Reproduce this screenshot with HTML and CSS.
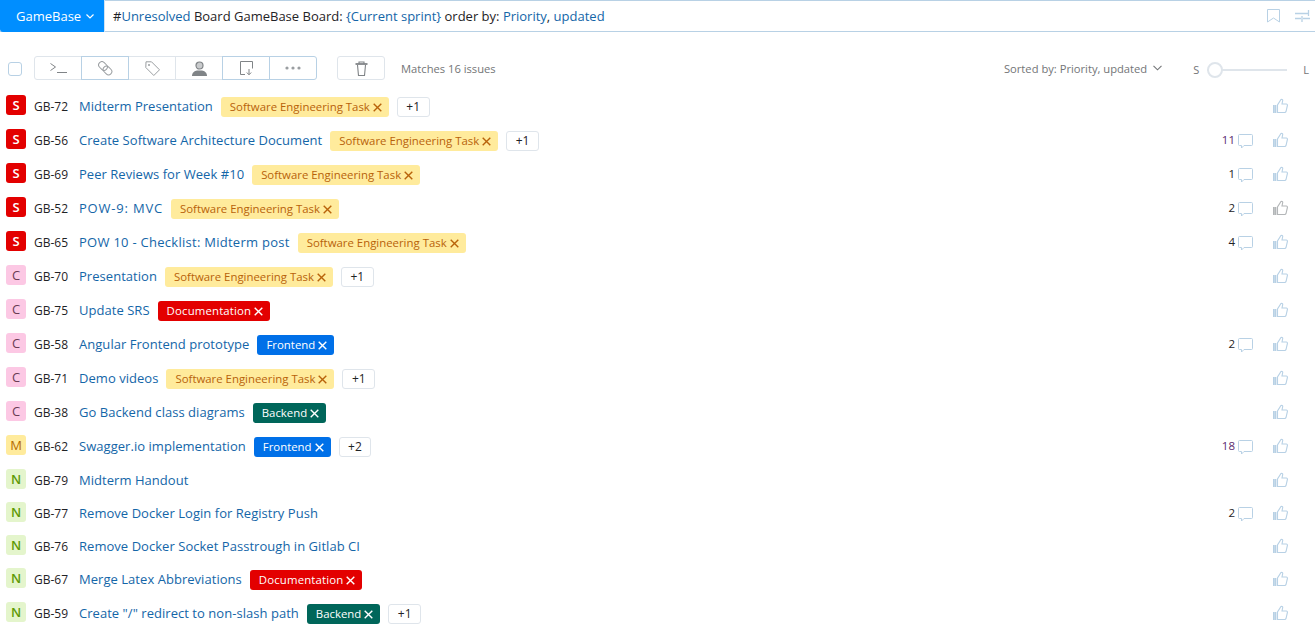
FILE: index.html
```html
<!DOCTYPE html>
<html lang="en">
<head>
    <meta charset="UTF-8">
    <title>Issues</title>
    <link rel="stylesheet" href="styles.css">
</head>
<body>
    <svg class="defs" width="0" height="0">
        <symbol id="i-x" viewBox="0 0 9 9"><path d="M.7.7l7.600 7.600M8.300.7L.7 8.300" fill="none" stroke="currentColor" stroke-width="1.400"/></symbol>
        <symbol id="i-comment" viewBox="0 0 15 15"><path d="M1.500.5h12a1 1 0 0 1 1 1v9a1 1 0 0 1-1 1H6l-2.500 2.500v-2.500H1.500a1 1 0 0 1-1-1v-9a1 1 0 0 1 1-1z" fill="none" stroke="currentColor"/></symbol>
        <symbol id="i-thumb" viewBox="0 0 15 16"><path d="M.5 7v8M2.500 7v8" fill="none" stroke="currentColor" stroke-width="1.800"/><path d="M4.500 14.500V7L8 1.500c1.300-.5 2 .4 1.600 1.700L9 6h4.300c.8 0 1.300.7 1.100 1.500l-1.400 6c-.2.700-.6 1-1.300 1z" fill="none" stroke="currentColor" stroke-width="1.100"/></symbol>
    </svg>

    <header class="search">
        <button class="context">GameBase
            <svg width="8" height="5" viewBox="0 0 8 5"><path d="M.5.500L4 4 7.500.500" fill="none" stroke="#fff" stroke-width="1.200"/></svg>
        </button>
        <div class="query">
            #<span class="lnk">Unresolved</span> Board GameBase Board: <span class="lnk">{Current sprint}</span> order by: <span class="lnk">Priority</span>, <span class="lnk">updated</span>
        </div>
        <svg class="q-icon" width="13" height="14" viewBox="0 0 13 14"><path d="M.5.500h12v12.500L6.500 9 .5 13z" fill="none" stroke="currentColor"/></svg>
        <svg class="q-icon" width="15" height="12" viewBox="0 0 15 12"><path d="M0 3.500h13M13.500 0v6M0 8.500h6M7 6v6M8 8.500h7" fill="none" stroke="currentColor" stroke-width="1.300"/></svg>
    </header>

    <section class="toolbar">
        <span class="check"></span>
        <div class="btn-group">
            <button class="tb-btn">
                <svg class="dark" width="17" height="10" viewBox="0 0 17 10"><path d="M.5.500L5.500 4 .5 7.500M7 9.500h10" fill="none" stroke="currentColor"/></svg>
            </button>
            <button class="tb-btn on">
                <svg width="15" height="15" viewBox="0 0 15 15"><g fill="none" stroke="currentColor"><rect x=".25" y="1.750" width="9.500" height="6.500" rx="3.250" transform="rotate(45 5 5)"/><rect x="4.750" y="6.250" width="9.500" height="6.500" rx="3.250" transform="rotate(45 9.500 9.500)"/></g></svg>
            </button>
            <button class="tb-btn">
                <svg width="15" height="15" viewBox="0 0 15 15"><path d="M1 .8h5.500l8 8-5.700 5.700-8-8z" fill="none" stroke="currentColor"/><circle cx="4" cy="4" r="1" fill="currentColor"/></svg>
            </button>
            <button class="tb-btn">
                <svg class="dark" width="15" height="15" viewBox="0 0 15 15"><circle cx="7.500" cy="4.500" r="3.500" fill="#c9cbcd" stroke="currentColor" stroke-width="1.200"/><path d="M0 15c0-3.500 2.500-5 5-5.500h5c2.500.5 5 2 5 5.500z" fill="currentColor"/></svg>
            </button>
            <button class="tb-btn on">
                <svg class="dark" width="13" height="14" viewBox="0 0 13 14"><path d="M5 13.500H.5V.5h12v7M9 8v5.500M6.800 11.500L9 13.800l2.200-2.300" fill="none" stroke="currentColor"/></svg>
            </button>
            <button class="tb-btn dots on">
                <svg width="16" height="4" viewBox="0 0 16 4"><circle cx="2" cy="2" r="1.600" fill="currentColor"/><circle cx="8" cy="2" r="1.600" fill="currentColor"/><circle cx="14" cy="2" r="1.600" fill="currentColor"/></svg>
            </button>
        </div>
        <button class="tb-btn trash">
            <svg class="dark" width="13" height="15" viewBox="0 0 13 15"><path d="M.5 3h12" fill="none" stroke="currentColor" stroke-width="1.800"/><path d="M4 3V1h5v2M2.500 4l1 10.500h6l1-10.500" fill="none" stroke="currentColor" stroke-width="1.100"/></svg>
        </button>
        <span class="matches">Matches 16 issues</span>
        <span class="sorted">Sorted by: Priority, updated
            <svg width="9" height="6" viewBox="0 0 9 6"><path d="M.5.800L4.500 4.800 8.500.800" fill="none" stroke="currentColor" stroke-width="1.100"/></svg>
        </span>
        <div class="size">
            <span>S</span>
            <div class="track"><i class="knob"></i></div>
            <span>L</span>
        </div>
    </section>

    <ul class="issues">
        <li class="issue">
            <span class="prio p-s">S</span><span class="id">GB-72</span><a class="title">Midterm Presentation</a>
            <span class="tag t-yellow">Software Engineering Task<svg><use href="#i-x"/></svg></span><span class="more">+1</span>
            <span class="stats"><svg class="thumb"><use href="#i-thumb"/></svg></span>
        </li>
        <li class="issue">
            <span class="prio p-s">S</span><span class="id">GB-56</span><a class="title">Create Software Architecture Document</a>
            <span class="tag t-yellow">Software Engineering Task<svg><use href="#i-x"/></svg></span><span class="more">+1</span>
            <span class="stats"><b class="n n-p">11</b><svg class="bubble"><use href="#i-comment"/></svg><svg class="thumb"><use href="#i-thumb"/></svg></span>
        </li>
        <li class="issue">
            <span class="prio p-s">S</span><span class="id">GB-69</span><a class="title">Peer Reviews for Week #10</a>
            <span class="tag t-yellow">Software Engineering Task<svg><use href="#i-x"/></svg></span>
            <span class="stats"><b class="n">1</b><svg class="bubble"><use href="#i-comment"/></svg><svg class="thumb"><use href="#i-thumb"/></svg></span>
        </li>
        <li class="issue">
            <span class="prio p-s">S</span><span class="id">GB-52</span><a class="title wider">POW-9: MVC</a>
            <span class="tag t-yellow">Software Engineering Task<svg><use href="#i-x"/></svg></span>
            <span class="stats"><b class="n">2</b><svg class="bubble"><use href="#i-comment"/></svg><svg class="thumb voted"><use href="#i-thumb"/></svg></span>
        </li>
        <li class="issue">
            <span class="prio p-s">S</span><span class="id">GB-65</span><a class="title wide">POW 10 - Checklist: Midterm post</a>
            <span class="tag t-yellow">Software Engineering Task<svg><use href="#i-x"/></svg></span>
            <span class="stats"><b class="n">4</b><svg class="bubble"><use href="#i-comment"/></svg><svg class="thumb"><use href="#i-thumb"/></svg></span>
        </li>
        <li class="issue">
            <span class="prio p-c">C</span><span class="id">GB-70</span><a class="title">Presentation</a>
            <span class="tag t-yellow">Software Engineering Task<svg><use href="#i-x"/></svg></span><span class="more">+1</span>
            <span class="stats"><svg class="thumb"><use href="#i-thumb"/></svg></span>
        </li>
        <li class="issue">
            <span class="prio p-c">C</span><span class="id">GB-75</span><a class="title">Update SRS</a>
            <span class="tag t-red">Documentation<svg><use href="#i-x"/></svg></span>
            <span class="stats"><svg class="thumb"><use href="#i-thumb"/></svg></span>
        </li>
        <li class="issue">
            <span class="prio p-c">C</span><span class="id">GB-58</span><a class="title">Angular Frontend prototype</a>
            <span class="tag t-blue">Frontend<svg><use href="#i-x"/></svg></span>
            <span class="stats"><b class="n">2</b><svg class="bubble"><use href="#i-comment"/></svg><svg class="thumb"><use href="#i-thumb"/></svg></span>
        </li>
        <li class="issue">
            <span class="prio p-c">C</span><span class="id">GB-71</span><a class="title">Demo videos</a>
            <span class="tag t-yellow">Software Engineering Task<svg><use href="#i-x"/></svg></span><span class="more">+1</span>
            <span class="stats"><svg class="thumb"><use href="#i-thumb"/></svg></span>
        </li>
        <li class="issue">
            <span class="prio p-c">C</span><span class="id">GB-38</span><a class="title">Go Backend class diagrams</a>
            <span class="tag t-green">Backend<svg><use href="#i-x"/></svg></span>
            <span class="stats"><svg class="thumb"><use href="#i-thumb"/></svg></span>
        </li>
        <li class="issue">
            <span class="prio p-m">M</span><span class="id">GB-62</span><a class="title">Swagger.io implementation</a>
            <span class="tag t-blue">Frontend<svg><use href="#i-x"/></svg></span><span class="more">+2</span>
            <span class="stats"><b class="n n-p">18</b><svg class="bubble"><use href="#i-comment"/></svg><svg class="thumb"><use href="#i-thumb"/></svg></span>
        </li>
        <li class="issue">
            <span class="prio p-n">N</span><span class="id">GB-79</span><a class="title">Midterm Handout</a>
            <span class="stats"><svg class="thumb"><use href="#i-thumb"/></svg></span>
        </li>
        <li class="issue">
            <span class="prio p-n">N</span><span class="id">GB-77</span><a class="title">Remove Docker Login for Registry Push</a>
            <span class="stats"><b class="n">2</b><svg class="bubble"><use href="#i-comment"/></svg><svg class="thumb"><use href="#i-thumb"/></svg></span>
        </li>
        <li class="issue">
            <span class="prio p-n">N</span><span class="id">GB-76</span><a class="title">Remove Docker Socket Passtrough in Gitlab CI</a>
            <span class="stats"><svg class="thumb"><use href="#i-thumb"/></svg></span>
        </li>
        <li class="issue">
            <span class="prio p-n">N</span><span class="id">GB-67</span><a class="title">Merge Latex Abbreviations</a>
            <span class="tag t-red">Documentation<svg><use href="#i-x"/></svg></span>
            <span class="stats"><svg class="thumb"><use href="#i-thumb"/></svg></span>
        </li>
        <li class="issue">
            <span class="prio p-n">N</span><span class="id">GB-59</span><a class="title">Create "/" redirect to non-slash path</a>
            <span class="tag t-green">Backend<svg><use href="#i-x"/></svg></span><span class="more">+1</span>
            <span class="stats"><svg class="thumb"><use href="#i-thumb"/></svg></span>
        </li>
    </ul>
</body>
</html>
```

FILE: styles.css
```css
:root {
    --link: #1466a8;
    --line: #b8d1e5;
    --line-soft: #dfe5eb;
    --muted: #737577;
}

* {
    margin: 0;
    padding: 0;
    box-sizing: border-box;
}

html, body {
    height: 632px;
    overflow: hidden;
}

body {
    font-family: "Open Sans", "Noto Sans", sans-serif;
    font-size: 13px;
    color: #1f2326;
    background: #fff;
}

.defs {
    position: absolute;
}

/* search bar */
.search {
    display: flex;
    align-items: center;
    height: 32px;
    border-top: 1px solid var(--line);
    border-bottom: 1px solid var(--line);
    padding-right: 5px;
}

.context {
    display: flex;
    align-items: center;
    gap: 5px;
    width: 105px;
    height: 32px;
    margin-top: -1px;
    margin-bottom: -1px;
    padding-left: 16px;
    border: 0;
    border-right: 1px solid #cfe2f2;
    border-radius: 0 0 0 3px;
    background: #008eff;
    color: #fff;
    font: inherit;
}

.query {
    flex: 1;
    padding-left: 8px;
}

.lnk {
    color: var(--link);
}

.q-icon {
    margin-left: 15px;
    color: var(--line);
}

/* toolbar */
.toolbar {
    display: flex;
    align-items: center;
    height: 24px;
    margin-top: 24px;
    padding-left: 8px;
    padding-right: 6px;
}

.check {
    width: 14px;
    height: 14px;
    margin-top: 1px;
    border: 1px solid var(--line);
    border-radius: 3px;
}

.btn-group {
    display: flex;
    margin-left: 12px;
}

.tb-btn {
    display: flex;
    align-items: center;
    justify-content: center;
    width: 47px;
    height: 24px;
    border: 1px solid var(--line-soft);
    border-left-width: 0;
    background: #fff;
    color: #9a9ea1;
}

.tb-btn:first-child {
    width: 48px;
    border-left-width: 1px;
    border-radius: 3px 0 0 3px;
}

.tb-btn.on {
    border-color: var(--line);
    border-left-width: 1px;
    margin-left: -1px;
    width: 48px;
}

.tb-btn.dots {
    border-radius: 0 3px 3px 0;
}

.tb-btn .dark {
    color: #808487;
}

.trash {
    width: 48px;
    margin-left: 20px;
    border-left-width: 1px;
    border-radius: 3px;
}

.matches {
    margin-left: 16px;
    font-size: 11.200px;
    color: var(--muted);
}

.sorted {
    display: flex;
    align-items: center;
    gap: 6px;
    margin-left: auto;
    font-size: 11.200px;
    color: var(--muted);
}

.size {
    display: flex;
    align-items: center;
    margin-left: 31px;
    margin-top: 3px;
    font-size: 11px;
    color: var(--muted);
}

.track {
    position: relative;
    width: 80px;
    height: 2px;
    margin-left: 8px;
    margin-right: 16px;
    background: var(--line-soft);
}

.knob {
    position: absolute;
    left: 0;
    top: -7px;
    width: 16px;
    height: 16px;
    border: 2px solid var(--line-soft);
    border-radius: 50%;
    background: #fff;
}

/* issue list */
.issues {
    list-style: none;
    margin-top: 10px;
}

.issue {
    display: flex;
    align-items: flex-start;
    padding: 7px 27px 7px 6px;
    line-height: 19px;
}

/* badge sits higher than the text and must not stretch the row */
.prio {
    flex: none;
    width: 20px;
    height: 20px;
    margin: -2px 8px -2px 0;
    border-radius: 3px;
    text-align: center;
    font-size: 13px;
    line-height: 20px;
}

.p-s { background: #e30000; color: #fff; font-weight: 600; }
.p-c { background: #fcc8e4; color: #6a3c55; }
.p-m { background: #ffeb9c; color: #b56b00; }
.p-n { background: #e4f5cc; color: #5d9a05; font-weight: 600; }

.id {
    width: 45px;
    font-size: 12px;
}

.title {
    margin-right: 8px;
    letter-spacing: .04px;
    color: var(--link);
}

.title.wide {
    letter-spacing: .27px;
}

.title.wider {
    letter-spacing: .8px;
}

.tag {
    display: flex;
    align-items: center;
    gap: 3px;
    height: 20px;
    padding: 0 7px 2px 9px;
    border-radius: 3px;
    font-size: 11.400px;
}

.tag svg {
    width: 9px;
    height: 9px;
    margin-top: 3px;
}

.t-yellow { background: #ffeb9c; color: #b8620a; }
.t-red { background: #e30000; color: #fff; letter-spacing: .15px; }
.t-blue { background: #0070e8; color: #fff; }
.t-green { background: #00665a; color: #fff; }

.more {
    height: 20px;
    margin-left: 8px;
    padding: 0 8.500px;
    border: 1px solid var(--line-soft);
    border-radius: 3px;
    font-size: 12px;
    line-height: 18px;
}

.stats {
    display: flex;
    align-items: flex-start;
    margin-left: auto;
    margin-top: 1px;
}

.n {
    font-weight: 400;
    font-size: 11.500px;
    line-height: 16px;
    margin-right: 3px;
}

.n-p {
    color: #5b2a6e;
}

.bubble {
    width: 15px;
    height: 15px;
    margin-top: 2px;
    margin-right: 20px;
    color: var(--line);
}

.thumb {
    width: 15px;
    height: 16px;
    color: var(--line);
}

.thumb.voted {
    color: #b3b6b8;
}
```
